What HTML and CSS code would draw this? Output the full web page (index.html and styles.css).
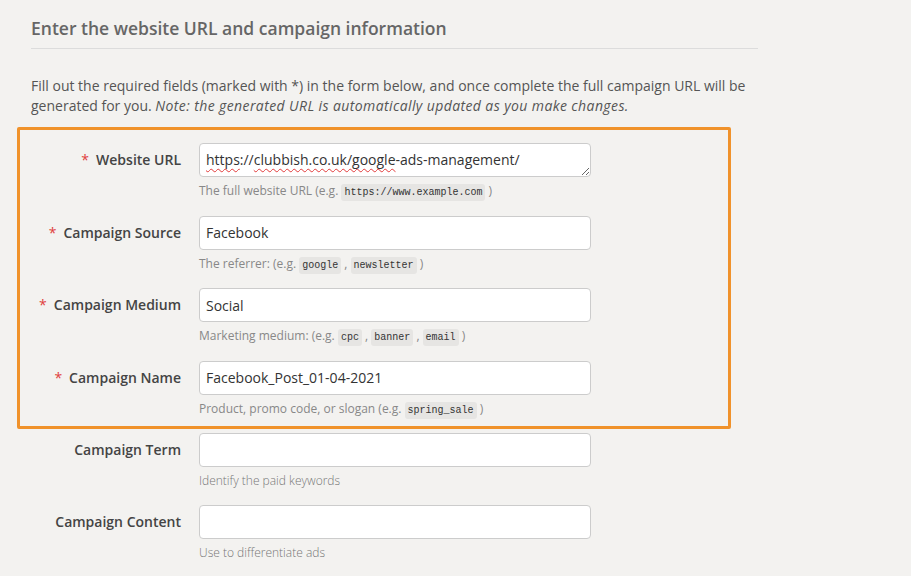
FILE: index.html
```html
<!DOCTYPE html>
<html lang="en">
<head>
    <meta charset="UTF-8">
    <meta name="viewport" content="width=device-width, initial-scale=1.0">
    <title>Campaign URL Builder</title>
    <link rel="stylesheet" href="styles.css">
</head>
<body>
    <div class="container">
        <h2 class="section-title">Enter the website URL and campaign information</h2>
        <p class="intro">Fill out the required fields (marked with *) in the form below, and once complete the full campaign URL will be generated for you. <em>Note: the generated URL is automatically updated as you make changes.</em></p>

        <form class="builder">
            <div class="highlight">
                <div class="row">
                    <label class="label required">Website URL</label>
                    <div class="control">
                        <div class="field field-area"><span class="typo">https</span>://<span class="typo">clubbish.co.uk/google</span>-ads-management/</div>
                        <p class="help">The full website URL (e.g. <code>https://www.example.com</code> )</p>
                    </div>
                </div>
                <div class="row">
                    <label class="label required">Campaign Source</label>
                    <div class="control">
                        <input class="field" type="text" value="Facebook">
                        <p class="help">The referrer: (e.g. <code>google</code> , <code>newsletter</code> )</p>
                    </div>
                </div>
                <div class="row">
                    <label class="label required">Campaign Medium</label>
                    <div class="control">
                        <input class="field" type="text" value="Social">
                        <p class="help">Marketing medium: (e.g. <code>cpc</code> , <code>banner</code> , <code>email</code> )</p>
                    </div>
                </div>
                <div class="row">
                    <label class="label required">Campaign Name</label>
                    <div class="control">
                        <input class="field" type="text" value="Facebook_Post_01-04-2021">
                        <p class="help">Product, promo code, or slogan (e.g. <code>spring_sale</code> )</p>
                    </div>
                </div>
            </div>
            <div class="row">
                <label class="label">Campaign Term</label>
                <div class="control">
                    <input class="field" type="text" value="">
                    <p class="help light">Identify the paid keywords</p>
                </div>
            </div>
            <div class="row">
                <label class="label">Campaign Content</label>
                <div class="control">
                    <input class="field" type="text" value="">
                    <p class="help light">Use to differentiate ads</p>
                </div>
            </div>
        </form>
    </div>
</body>
</html>
```

FILE: styles.css
```css
body {
    margin: 0;
    padding: 0;
    background-color: #f3f2f0;
    font-family: "Open Sans", Arial, sans-serif;
    color: #555;
}

.container {
    width: 727px;
    padding: 0 0 0 31px;
}

.section-title {
    margin: 0;
    padding: 16px 0 8px;
    font-size: 17.5px;
    font-weight: 600;
    line-height: 24px;
    color: #666;
    border-bottom: 1px solid #dcdcdc;
}

.intro {
    margin: 27px 0 12px;
    font-size: 14px;
    line-height: 19.5px;
    color: #555;
}

.intro em {
    letter-spacing: 0.4px;
}

.highlight {
    width: 714px;
    margin: 0 0 4px -14px;
    padding: 13px 0 7px 11px;
    border: 3px solid #f0922b;
    border-radius: 2px;
    box-sizing: border-box;
}

.row {
    display: flex;
    align-items: flex-start;
    margin-bottom: 14.5px;
}

.row:last-child {
    margin-bottom: 0;
}

.label {
    width: 150px;
    margin-right: 18px;
    font-size: 14px;
    font-weight: 600;
    line-height: 34px;
    color: #444;
    text-align: right;
}

.required::before {
    content: "*";
    color: #e0403c;
    font-weight: 400;
    margin-right: 7px;
}

.control {
    width: 392px;
}

.field {
    display: block;
    width: 392px;
    height: 34px;
    margin: 0;
    padding: 0 6px;
    font-family: "Open Sans", Arial, sans-serif;
    font-size: 14px;
    line-height: 32px;
    color: #333;
    background-color: #fff;
    border: 1px solid #ccc;
    border-radius: 4px;
    box-sizing: border-box;
    outline: none;
}

.field-area {
    overflow: hidden;
    resize: vertical;
    white-space: nowrap;
}

.typo {
    text-decoration: underline wavy #e23b3b;
    text-decoration-thickness: 1px;
    text-underline-offset: 3px;
}

.help {
    margin: 4px 0 0;
    font-size: 12px;
    line-height: 20px;
    color: #888;
}

.help.light {
    font-weight: 300;
    color: #777;
}

code {
    display: inline-block;
    padding: 0 3px;
    font-family: "Liberation Mono", "DejaVu Sans Mono", monospace;
    font-size: 10px;
    line-height: 17px;
    color: #333;
    background-color: #e6e5e3;
    border-radius: 3px;
}
```
